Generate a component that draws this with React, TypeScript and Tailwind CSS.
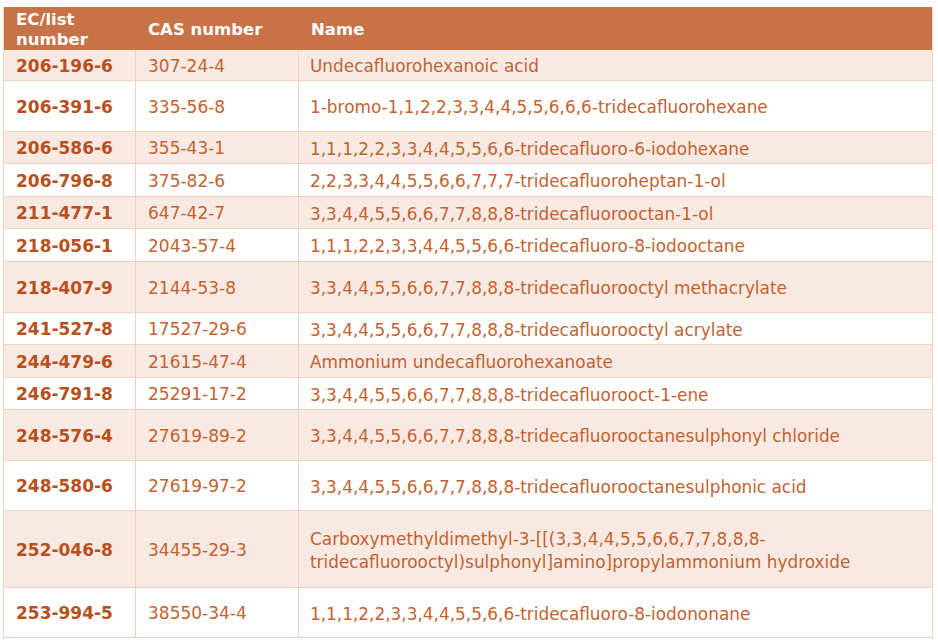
const rows: { ec: string; cas: string; name: string; h: string; tint: boolean }[] = [
  { ec: "206-196-6", cas: "307-24-4", name: "Undecafluorohexanoic acid", h: "h-[31px]", tint: true },
  { ec: "206-391-6", cas: "335-56-8", name: "1-bromo-1,1,2,2,3,3,4,4,5,5,6,6,6-tridecafluorohexane", h: "h-[51px]", tint: false },
  { ec: "206-586-6", cas: "355-43-1", name: "1,1,1,2,2,3,3,4,4,5,5,6,6-tridecafluoro-6-iodohexane", h: "h-[32px]", tint: true },
  { ec: "206-796-8", cas: "375-82-6", name: "2,2,3,3,4,4,5,5,6,6,7,7,7-tridecafluoroheptan-1-ol", h: "h-[33px]", tint: false },
  { ec: "211-477-1", cas: "647-42-7", name: "3,3,4,4,5,5,6,6,7,7,8,8,8-tridecafluorooctan-1-ol", h: "h-[32px]", tint: true },
  { ec: "218-056-1", cas: "2043-57-4", name: "1,1,1,2,2,3,3,4,4,5,5,6,6-tridecafluoro-8-iodooctane", h: "h-[33px]", tint: false },
  { ec: "218-407-9", cas: "2144-53-8", name: "3,3,4,4,5,5,6,6,7,7,8,8,8-tridecafluorooctyl methacrylate", h: "h-[51px]", tint: true },
  { ec: "241-527-8", cas: "17527-29-6", name: "3,3,4,4,5,5,6,6,7,7,8,8,8-tridecafluorooctyl acrylate", h: "h-[32px]", tint: false },
  { ec: "244-479-6", cas: "21615-47-4", name: "Ammonium undecafluorohexanoate", h: "h-[33px]", tint: true },
  { ec: "246-791-8", cas: "25291-17-2", name: "3,3,4,4,5,5,6,6,7,7,8,8,8-tridecafluorooct-1-ene", h: "h-[32px]", tint: false },
  { ec: "248-576-4", cas: "27619-89-2", name: "3,3,4,4,5,5,6,6,7,7,8,8,8-tridecafluorooctanesulphonyl chloride", h: "h-[51px]", tint: true },
  { ec: "248-580-6", cas: "27619-97-2", name: "3,3,4,4,5,5,6,6,7,7,8,8,8-tridecafluorooctanesulphonic acid", h: "h-[50px]", tint: false },
  {
    ec: "252-046-8",
    cas: "34455-29-3",
    name: "Carboxymethyldimethyl-3-[[(3,3,4,4,5,5,6,6,7,7,8,8,8-\ntridecafluorooctyl)sulphonyl]amino]propylammonium hydroxide",
    h: "h-[77px]",
    tint: true,
  },
  { ec: "253-994-5", cas: "38550-34-4", name: "1,1,1,2,2,3,3,4,4,5,5,6,6-tridecafluoro-8-iodononane", h: "h-[50px]", tint: false },
];

const Row = ({ ec, cas, name, h, tint }: (typeof rows)[number]) => (
  <div className={`flex ${h} border-b border-[#f1d2c1] ${tint ? "bg-[#f8eae3]" : "bg-white"}`}>
    <div className="flex w-[132px] shrink-0 items-center border-r border-[#f1d2c1] pl-[12px] pt-[3px] font-bold text-[#b84f1c]">
      {ec}
    </div>
    <div className="flex w-[163px] shrink-0 items-center border-r border-[#f1d2c1] pl-[12px] pt-[3px] text-[#c3622f]">
      {cas}
    </div>
    <div className="flex flex-1 items-center whitespace-pre-line pl-[11px] pt-[3px] text-[16.9px] leading-[23px] text-[#c3622f]">
      {name}
    </div>
  </div>
);

export default function App() {
  return (
    <div className="h-[642px] w-[938px] bg-white pl-[3px] pt-[7px] font-['DejaVu_Sans',Verdana,sans-serif] text-[17px]">
      <div className="w-[930px] border-x border-[#f1d2c1]">
        <div className="flex h-[43px] bg-[#c87248] pt-[3px] text-[16.5px] font-bold text-white">
          <div className="flex w-[132px] shrink-0 items-center pl-[12px] leading-[20px]">
            EC/list
            <br />
            number
          </div>
          <div className="flex w-[163px] shrink-0 items-center pl-[12px]">CAS number</div>
          <div className="flex flex-1 items-center pl-[12px]">Name</div>
        </div>
        {rows.map((r) => (
          <Row key={r.ec} {...r} />
        ))}
      </div>
    </div>
  );
}
